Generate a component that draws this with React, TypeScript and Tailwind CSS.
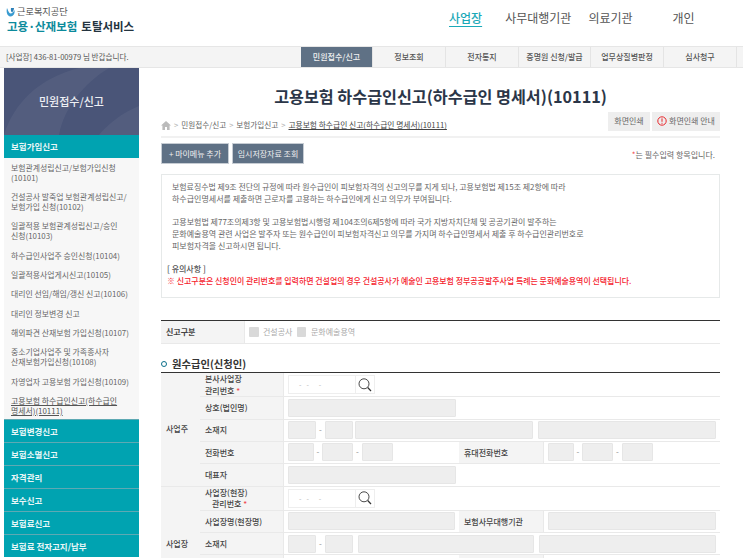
import React from "react";

const font = { fontFamily: '"Noto Sans CJK KR", "Noto Sans", sans-serif' };

const tabs = [
  ["민원접수/신고", "w-[72px]"],
  ["정보조회", "w-[73px]"],
  ["전자통지", "w-[73px]"],
  ["증명원 신청/발급", "w-[72px]"],
  ["업무상질병판정", "w-[73px]"],
  ["심사청구", "w-[73px]"],
];

const subs = [
  ["보험관계성립신고/보험가입신청", "(10101)"],
  ["건설공사 발죽업 보험관계성립신고/", "보험가입 신청(10102)"],
  ["일괄적용 보험관계성립신고/승인", "신청(10103)"],
  ["하수급인사업주 승인신청(10104)"],
  ["일괄적용사업게시신고(10105)"],
  ["대리인 선임/해임/갱신 신고(10106)"],
  ["대리인 정보변경 신고"],
  ["해외파견 산재보험 가입신청(10107)"],
  ["중소기업사업주 및 가족종사자", "산재보험가입신청(10108)"],
  ["자영업자 고용보험 가입신청(10109)"],
];

const teal = [
  ["보험변경신고", "h-[23px]"],
  ["보험소멸신고", "h-[23px]"],
  ["자격관리", "h-[23px]"],
  ["보수신고", "h-[22.5px]"],
  ["보험료신고", "h-[23px]"],
  ["보험료 전자고지/납부", "h-[23px]"],
];

function Field({ w, ml = "" }: { w: string; ml?: string }) {
  return <div className={`h-[18px] shrink-0 rounded-[1px] border border-[#e6e6e6] bg-[#eeeeee] ${w} ${ml}`} />;
}

function Dash({ w }: { w: string }) {
  return <div className={`shrink-0 text-center text-[8px] leading-none text-[#888] ${w}`}>-</div>;
}

function Label({ children, w = "w-[84px]" }: { children?: React.ReactNode; w?: string }) {
  return (
    <div className={`flex h-full shrink-0 items-center border-r border-[#e9e9e9] bg-[#f4f4f4] pl-[5px] text-[8px] font-medium leading-[11.5px] text-[#444] ${w}`}>
      <div>{children}</div>
    </div>
  );
}

function Row({ h, children }: { h: string; children: React.ReactNode }) {
  return <div className={`flex items-center border-b border-[#e9e9e9] ${h}`}>{children}</div>;
}

function Star() {
  return <span className="text-[#f0484e]"> *</span>;
}

function SearchInput() {
  return (
    <div className="flex h-[19px] items-stretch border border-[#eeeeee] bg-white">
      <div className="flex w-[66px] items-center pl-[10px] text-[7px] text-[#b5b5b5]">
        <span className="tracking-[5px]">--</span>
        <span className="ml-[5px]">-</span>
      </div>
      <div className="flex w-[19px] items-center justify-center border-l border-[#eeeeee]">
        <svg width="14" height="14" viewBox="0 0 14 14" fill="none" stroke="#333" strokeWidth="0.9">
          <circle cx="6" cy="5.8" r="5" />
          <path d="M9.7 9.5 L13 13" strokeWidth="1.2" />
        </svg>
      </div>
    </div>
  );
}

export default function App() {
  return (
    <div className="h-[558px] w-[743px] overflow-hidden bg-white" style={font}>
      {/* header */}
      <header className="flex h-[46px] bg-white">
        <div className="ml-[6px] flex w-[432px] flex-col pt-[6px]">
          <div className="flex items-center gap-[2px]">
            <svg width="9" height="10" viewBox="0 0 9 10">
              <path d="M1 1 C0 5 1 9 4.5 9.5 C8 9 9 6 8.5 3 C7 6 5 7 3.5 6 C2.5 5 2 3 1 1Z" fill="#3a9bd0" />
              <path d="M5 1 C4.6 3 5 5 6 5.2 C7.5 4.5 8 2 8 1 Z" fill="#2b7fb8" />
            </svg>
            <span className="text-[9.2px] leading-[11px] text-[#555]">근로복지공단</span>
          </div>
          <div className="mt-[2px] whitespace-nowrap pl-[1px] text-[11.5px] font-bold leading-[15px]">
            <span className="text-[#0b8a9b]">고용·산재보험</span>
            <span className="ml-[4px] text-[#24343f]">토탈서비스</span>
          </div>
        </div>
        <nav className="flex flex-1 items-start pt-[9px] text-[12px] leading-[18px] text-[#555]">
          <span className="ml-[11px] font-medium text-[#1ba9b8] underline underline-offset-[3px]">사업장</span>
          <span className="ml-[23px]">사무대행기관</span>
          <span className="ml-[17px]">의료기관</span>
          <span className="ml-[40px]">개인</span>
        </nav>
      </header>

      {/* gnb */}
      <div className="flex h-[22px] items-stretch border-y border-[#e6e6e6] bg-[#f4f4f4]">
        <div className="flex w-[301px] items-center pl-[6px] text-[7.6px] text-[#555]">[사업장] 436-81-00979 님 반갑습니다.</div>
        {tabs.map(([t, w], i) => (
          <div
            key={t}
            className={`flex items-center justify-center whitespace-nowrap border-r border-[#e4e4e4] text-[8px] font-medium ${w} ${i === 0 ? "bg-[#5f7185] text-[#f2f2f2]" : "text-[#555]"}`}
          >
            {t}
          </div>
        ))}
      </div>

      <div className="flex">
        {/* sidebar */}
        <aside className="ml-[4px] w-[135px] shrink-0">
          <div className="relative flex h-[67px] items-center justify-center overflow-hidden bg-[#4a5578]">
            <svg className="absolute inset-0" width="135" height="67" viewBox="0 0 135 67">
              <path d="M0 67 C10 35 35 10 75 0 L105 0 C80 15 60 40 55 67 Z" fill="#ffffff" fillOpacity="0.05" />
              <path d="M95 67 C105 55 118 45 135 38 L135 67 Z" fill="#ffffff" fillOpacity="0.05" />
            </svg>
            <span className="relative text-[11px] font-medium text-[#eef0f4]">민원접수/신고</span>
          </div>
          <div className="flex h-[23px] items-center bg-[#00a3b1] pl-[7px] text-[8.5px] font-bold text-[#eaf7f8]">보험가입신고</div>
          <div className="h-[261px] bg-[#f7f7f7] text-[7.9px] leading-[10.1px] text-[#666]">
            {subs.map((s) => (
              <div key={s[0]} className="whitespace-nowrap py-[4.6px] pl-[7px]">
                {s.map((l) => (
                  <div key={l}>{l}</div>
                ))}
              </div>
            ))}
            <div className="whitespace-nowrap py-[4.6px] pl-[7px] text-[#555] underline">
              <div>고용보험 하수급인신고(하수급인</div>
              <div>명세서)(10111)</div>
            </div>
          </div>
          {teal.map(([t, h]) => (
            <div key={t} className={`flex items-center border-t border-[#5ea9b3] bg-[#00a3b1] pl-[7px] text-[8.5px] font-bold leading-[20px] text-[#eaf7f8] ${h}`}>
              {t}
            </div>
          ))}
        </aside>

        {/* main */}
        <main className="ml-[22px] w-[559px] shrink-0">
          <h1 className="mt-[17px] whitespace-nowrap text-center text-[16.2px] font-semibold leading-[22px] text-[#2b3648]">
            고용보험 하수급인신고(하수급인 명세서)(10111)
          </h1>
          <div className="mt-[8px] flex h-[20px] items-center justify-between">
            <div className="flex items-center whitespace-nowrap text-[7.6px] text-[#666]">
              <svg width="10" height="9" viewBox="0 0 10 9" fill="#bbbbbb">
                <path d="M5 0 L10 4.5 L8.6 4.5 L8.6 9 L6 9 L6 6 L4 6 L4 9 L1.4 9 L1.4 4.5 L0 4.5 Z" />
              </svg>
              <span className="mx-[3px] text-[#aaa]">&gt;</span>
              <span>민원접수/신고</span>
              <span className="mx-[3px] text-[#aaa]">&gt;</span>
              <span>보험가입신고</span>
              <span className="mx-[3px] text-[#aaa]">&gt;</span>
              <span className="text-[7.75px] text-[#444] underline">고용보험 하수급인 신고(하수급인 명세서)(10111)</span>
            </div>
            <div className="mb-[8px] flex gap-[2px]">
              <div className="flex h-[19px] w-[42px] items-center justify-center bg-[#eeeeee] text-[8px] text-[#666]">화면인쇄</div>
              <div className="flex h-[19px] w-[68px] items-center justify-center gap-[2px] bg-[#eeeeee] text-[8px] text-[#666]">
                <svg width="10" height="10" viewBox="0 0 10 10" fill="none">
                  <circle cx="5" cy="5" r="4.2" stroke="#e8262b" strokeWidth="1" />
                  <path d="M5 2.4 V5.8 M5 6.8 V7.8" stroke="#e8262b" strokeWidth="1" />
                </svg>
                화면인쇄 안내
              </div>
            </div>
          </div>
          <div className="mt-[1px] h-[2px] bg-[#f1f1f1]" />
          <div className="mt-[5px] flex items-start justify-between">
            <div className="flex gap-[3px]">
              <div className="flex h-[21px] w-[68px] items-center justify-center border border-[#c6ccd3] bg-[#5f7185] text-[8px] text-[#f0f0f0]">+ 마이메뉴 추가</div>
              <div className="flex h-[21px] w-[72px] items-center justify-center border border-[#c6ccd3] bg-[#5f7185] text-[8px] text-[#f0f0f0]">임시저장자료 조회</div>
            </div>
            <div className="mr-[5px] mt-[6px] whitespace-nowrap text-[8px] leading-[12px] text-[#666]">
              <span className="text-[#f0484e]">*</span>는 필수입력 항목입니다.
            </div>
          </div>

          <div className="mt-[10px] h-[124px] border border-[#e6e9e9] pl-[5px] pt-[6px] text-[8px] leading-[11.75px] text-[#666]">
            <div className="whitespace-nowrap pl-[5px]">
              <div className="text-[7.95px]">보험료징수법 제9조 전단의 규정에 따라 원수급인이 피보험자격의 신고의무를 지게 되나, 고용보험법 제15조 제2항에 따라</div>
              <div>하수급인명세서를 제출하면 근로자를 고용하는 하수급인에게 신고 의무가 부여됩니다.</div>
              <div className="mt-[11.75px]">고용보험법 제77조의제3항 및 고용보험법시행령 제104조의6제5항에 따라 국가 지방자치단체 및 공공기관이 발주하는</div>
              <div>문화예술용역 관련 사업은 발주자 또는 원수급인이 피보험자격신고 의무를 가지며 하수급인명세서 제출 후 하수급인관리번호로</div>
              <div>피보험자격을 신고하시면 됩니다.</div>
            </div>
            <div className="mt-[11.75px] font-medium text-[#555]">[ 유의사항 ]</div>
            <div className="whitespace-nowrap text-[7.95px] font-medium text-[#f5222d]">※ 신고구분은 신청인이 관리번호를 입력하면 건설업의 경우 건설공사가 예술인 고용보험 정부공공발주사업 특례는 문화예술용역이 선택됩니다.</div>
          </div>

          <div className="mt-[22px] flex h-[24px] items-center border-b border-t border-b-[#e9e9e9] border-t-[#333]">
            <div className="flex h-full w-[84px] shrink-0 items-center border-r border-[#e9e9e9] bg-[#f4f4f4] pl-[5px] text-[8px] font-bold text-[#444]">신고구분</div>
            <div className="ml-[4px] flex items-center text-[8px] text-[#aaa]">
              <div className="h-[10px] w-[9.5px] rounded-[1px] bg-[#d9d9d9]" />
              <span className="ml-[4.5px]">건설공사</span>
              <div className="ml-[4.5px] h-[10px] w-[9.5px] rounded-[1px] bg-[#d9d9d9]" />
              <span className="ml-[4.5px]">문화예술용역</span>
            </div>
          </div>

          <div className="mt-[11px] flex h-[17px] items-center">
            <div className="h-[6px] w-[6px] rounded-full border-[1.5px] border-[#0b6f8a]" />
            <span className="ml-[5px] text-[10.3px] font-semibold text-[#333]">원수급인(신청인)</span>
          </div>

          <div className="border-t border-[#333]">
            <div className="flex">
              <div className="flex w-[39px] shrink-0 items-center border-b border-[#e9e9e9] bg-[#f4f4f4] pl-[5px] text-[8px] font-medium text-[#444]">사업주</div>
              <div className="flex-1">
                <Row h="h-[24px]">
                  <Label w="w-[84px]">
                    <div>본사사업장</div>
                    <div>관리번호<Star /></div>
                  </Label>
                  <div className="ml-[4px]"><SearchInput /></div>
                </Row>
                <Row h="h-[22.5px]">
                  <Label>상호(법인명)</Label>
                  <Field w="w-[168px]" ml="ml-[4px]" />
                </Row>
                <Row h="h-[22px]">
                  <Label>소재지</Label>
                  <Field w="w-[28px]" ml="ml-[4px]" />
                  <Dash w="w-[9px]" />
                  <Field w="w-[28px]" />
                  <Field w="w-[178px]" ml="ml-[2px]" />
                  <Field w="w-[178px]" ml="ml-[5px]" />
                </Row>
                <Row h="h-[22.5px]">
                  <Label>전화번호</Label>
                  <Field w="w-[26px]" ml="ml-[4px]" />
                  <Dash w="w-[8px]" />
                  <Field w="w-[31px]" />
                  <Dash w="w-[9px]" />
                  <Field w="w-[31px]" />
                  <div className="ml-[66px] h-full">
                    <Label w="w-[85px]">휴대전화번호</Label>
                  </div>
                  <Field w="w-[26px]" ml="ml-[4px]" />
                  <Dash w="w-[8px]" />
                  <Field w="w-[31px]" />
                  <Dash w="w-[9px]" />
                  <Field w="w-[31px]" />
                </Row>
                <Row h="h-[22.5px]">
                  <Label>대표자</Label>
                  <Field w="w-[168px]" ml="ml-[4px]" />
                </Row>
              </div>
            </div>
            <div className="flex">
              <div className="flex w-[39px] shrink-0 items-center bg-[#f4f4f4] pl-[5px] pt-[24px] text-[8px] font-medium text-[#444]">사업장</div>
              <div className="flex-1">
                <Row h="h-[24px]">
                  <Label>
                    <div>사업장(현장)</div>
                    <div className="pl-[7px]">관리번호<Star /></div>
                  </Label>
                  <div className="ml-[4px]"><SearchInput /></div>
                </Row>
                <Row h="h-[22.5px]">
                  <Label>사업장명(현장명)</Label>
                  <Field w="w-[167px]" ml="ml-[4px]" />
                  <div className="ml-[4px] h-full">
                    <Label w="w-[85px]">보험사무대행기관</Label>
                  </div>
                  <Field w="w-[168px]" ml="ml-[4px]" />
                </Row>
                <Row h="h-[22px]">
                  <Label>소재지</Label>
                  <Field w="w-[28px]" ml="ml-[4px]" />
                  <Dash w="w-[9px]" />
                  <Field w="w-[28px]" />
                  <Field w="w-[176px]" ml="ml-[5px]" />
                  <Field w="w-[177px]" ml="ml-[5px]" />
                </Row>
                <Row h="h-[22px]">
                  <Label />
                  <div className="ml-[175px] h-full">
                    <Label w="w-[85px]" />
                  </div>
                </Row>
              </div>
            </div>
          </div>
        </main>
      </div>
    </div>
  );
}
